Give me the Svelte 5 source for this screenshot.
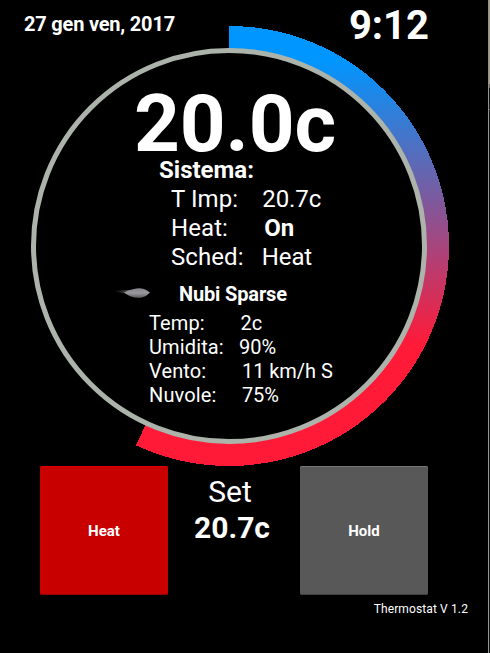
<script>
  const system = [
    { label: 'T Imp:    ', value: '20.7c' },
    { label: 'Heat:      ', value: 'On', strong: true },
    { label: 'Sched:   ', value: 'Heat' }
  ];
  const weather = [
    { label: 'Temp:       ', value: '2c' },
    { label: 'Umidita:   ', value: '90%' },
    { label: 'Vento:       ', value: '11 km/h S' },
    { label: 'Nuvole:     ', value: '75%' }
  ];
  // Gauge arc runs clockwise from the top to this angle.
  const end = (205 * Math.PI) / 180;
  const point = (r) => `${229 + r * Math.sin(end)} ${246 - r * Math.cos(end)}`;
  const arc = `M229 26A220 220 0 1 1 ${point(220)}L${point(196)}A196 196 0 1 0 229 50Z`;
</script>

<main class="screen">
  <svg class="dial" width="490" height="653" viewBox="0 0 490 653">
    <defs>
      <linearGradient id="heat" gradientUnits="userSpaceOnUse" x1="0" y1="60" x2="0" y2="345">
        <stop offset="0" stop-color="#0096ff" />
        <stop offset="1" stop-color="#ff1a38" />
      </linearGradient>
    </defs>
    <path d={arc} fill="url(#heat)" shape-rendering="crispEdges" />
    <circle cx="229" cy="246" r="195.5" fill="#000" stroke="#abb3aa" stroke-width="5" />
  </svg>

  <div class="content">
    <header>
      <div class="date">27 gen ven, 2017</div>
      <div class="time">9:12</div>
    </header>

    <section class="readout">
      <div class="current">20.0c</div>
      <div class="system">
        <h2>Sistema:</h2>
        {#each system as row}
          <p>{row.label}<span class:strong={row.strong}>{row.value}</span></p>
        {/each}
      </div>
      <div class="condition">
        <svg width="40" height="16" viewBox="0 0 40 16">
          <defs>
            <linearGradient id="wisp" gradientUnits="userSpaceOnUse" x1="0" y1="0" x2="18" y2="0">
              <stop offset="0" stop-color="#555" stop-opacity="0" />
              <stop offset="1" stop-color="#68686b" />
            </linearGradient>
            <linearGradient id="cloud" x1="0" y1="0" x2="0" y2="1">
              <stop offset="0" stop-color="#858589" />
              <stop offset=".5" stop-color="#99999d" />
              <stop offset="1" stop-color="#5c5c60" />
            </linearGradient>
            <filter id="soft" x="-20%" y="-50%" width="140%" height="200%">
              <feGaussianBlur stdDeviation=".7" />
            </filter>
          </defs>
          <g filter="url(#soft)">
            <path d="M0 5.500Q9 5 18 5V9Q8 8.500 0 6.500Z" fill="url(#wisp)" />
            <path d="M10 7.500Q15 4.500 20 4Q25 2.500 30 4Q34 5.500 36 7.500Q33 11 28 12.500Q22 13.500 17 11.500Q13 10 10 7.500Z" fill="url(#cloud)" />
          </g>
        </svg>
        <h3>Nubi Sparse</h3>
      </div>
      <div class="weather">
        {#each weather as row}
          <p>{row.label}<span>{row.value}</span></p>
        {/each}
      </div>
    </section>

    <section class="controls">
      <button class="heat">Heat</button>
      <div class="set">
        <span>Set</span>
        <strong>20.7c</strong>
      </div>
      <button class="hold">Hold</button>
    </section>

    <footer>Thermostat V 1.2</footer>
  </div>
  <div class="edge"></div>
</main>

<style>
  :global(body) { background: #000; }
  .screen {
    display: grid;
    width: 490px;
    height: 653px;
    overflow: hidden;
    background: #000;
    color: #fff;
    font-family: Roboto, sans-serif;
  }
  .dial, .content, .edge { grid-area: 1 / 1; }
  .content { display: flex; flex-direction: column; }
  h2, h3, p { margin: 0; }
  p { white-space: pre; }
  header {
    display: flex;
    justify-content: space-between;
    height: 50px;
    padding: 2px 61px 0 24px;
    box-sizing: border-box;
    font-weight: 700;
  }
  .date { margin-top: 10px; font-size: 20px; line-height: 24px; letter-spacing: -.2px; }
  .time { font-size: 40px; line-height: 48px; }
  .readout { height: 416px; padding-top: 43px; box-sizing: border-box; }
  .current { padding-left: 134px; font-size: 80px; line-height: 62px; font-weight: 700; letter-spacing: -.1px; }
  .system { padding: 1px 0 0 171px; font-size: 24px; line-height: 29px; }
  .system p { letter-spacing: .08px; }
  .system p span { letter-spacing: -.08px; }
  h2 { margin-left: -12px; font-size: 24px; font-weight: 700; }
  .strong { font-weight: 700; }
  .condition { display: flex; padding-left: 114px; margin-top: 10px; height: 29px; }
  .condition svg { margin-top: 3px; }
  h3 { margin-left: 25px; font-size: 20px; line-height: 24px; font-weight: 700; letter-spacing: -.15px; }
  .weather { padding-left: 149px; font-size: 20px; line-height: 24px; }
  .weather p { letter-spacing: .13px; }
  .weather p span { letter-spacing: -.05px; }
  .controls { display: flex; padding-left: 40px; height: 128px; }
  button {
    width: 128px;
    height: 129px;
    padding: 0;
    border: 0;
    border-radius: 2px;
    color: #fff;
    font: 700 15px Roboto, sans-serif;
  }
  .heat { background: #c80000; box-shadow: inset 0 1px #d80000, inset 0 -1px #990000; }
  .hold { background: #585858; box-shadow: inset 0 1px #777, inset 0 -1px #424242; }
  .set {
    display: flex;
    flex-direction: column;
    align-items: center;
    width: 132px;
    padding: 8px 8px 0 0;
    box-sizing: border-box;
    font-size: 30px;
    line-height: 36px;
  }
  .set strong { margin-left: 4px; }
  footer { padding: 8px 22px 0 0; text-align: right; font-size: 12px; line-height: 14px; letter-spacing: .12px; }
  .edge {
    justify-self: end;
    width: 1px;
    height: 653px;
    border-left: 1px solid #9c8f84;
    background: linear-gradient(#a49e95 0 84px, #666 84px 88px, #071724 88px 109px, #555 109px 110px, #071724 110px);
  }
</style>
